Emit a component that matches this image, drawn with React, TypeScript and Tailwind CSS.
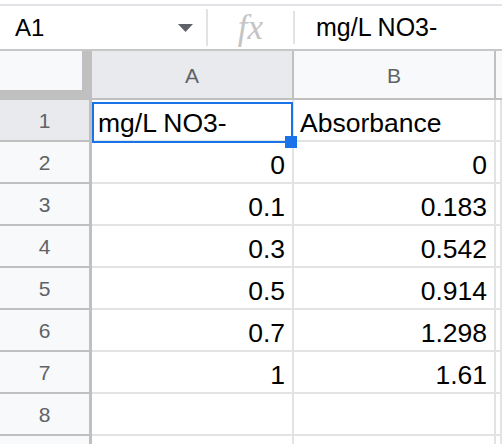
import React from "react";

const rows: { n: number; a: string; b: string; text?: boolean }[] = [
  { n: 1, a: "mg/L NO3-", b: "Absorbance", text: true },
  { n: 2, a: "0", b: "0" },
  { n: 3, a: "0.1", b: "0.183" },
  { n: 4, a: "0.3", b: "0.542" },
  { n: 5, a: "0.5", b: "0.914" },
  { n: 6, a: "0.7", b: "1.298" },
  { n: 7, a: "1", b: "1.61" },
  { n: 8, a: "", b: "" },
];

export default function App() {
  return (
    <div
      className="relative w-[502px] h-[444px] overflow-hidden bg-white"
      style={{ fontFamily: '"Liberation Sans", Arial, sans-serif' }}
    >
      {/* top line */}
      <div className="h-[4px] bg-white" />
      <div className="h-[2px] bg-[#e1e3e6]" />
      {/* formula bar */}
      <div className="flex h-[45px] items-center border-b-2 border-[#c7c7c7]">
        <div className="flex w-[206px] items-center">
          <span className="pl-[15px] text-[24px] leading-none text-black">A1</span>
          <div className="flex-1" />
          <svg width="15" height="8" viewBox="0 0 15 8" className="mr-[13px] mt-[1px]">
            <path d="M0 0 L15 0 L7.5 8 Z" fill="#5f6368" />
          </svg>
        </div>
        <div className="h-[37px] w-[2px] bg-[#e1e3e6]" />
        <div className="flex w-[85px] justify-center">
          <span
            className="text-[35px] leading-none italic text-[#c4c4c4]"
            style={{ fontFamily: '"Liberation Serif", "Times New Roman", serif' }}
          >
            fx
          </span>
        </div>
        <div className="h-[33px] w-[2px] bg-[#e1e3e6]" />
        <span className="pl-[21px] text-[25px] leading-none text-black">mg/L NO3-</span>
      </div>

      {/* column headers */}
      <div className="flex h-[49px]">
        <div className="w-[92px] h-full bg-[#c0c0c0]">
          <div className="w-[82px] h-[39px] bg-[#f8f9fa]" />
        </div>
        <div className="flex w-[202px] items-center justify-center border-r-2 border-b-2 border-[#c0c0c0] bg-[#e8eaed] pt-[2px] text-[21px] text-[#5f6368]">
          A
        </div>
        <div className="flex w-[202px] items-center justify-center border-r-2 border-b-2 border-[#c0c0c0] bg-[#f8f9fa] pt-[2px] text-[21px] text-[#5f6368]">
          B
        </div>
        <div className="flex-1 border-b-2 border-[#c0c0c0] bg-[#f8f9fa]" />
      </div>

      {/* rows */}
      {rows.map((r) => (
        <div key={r.n} className="flex h-[42px]">
          <div
            className={`flex w-[92px] items-center justify-center border-r-[3px] border-b-2 border-[#c0c0c0] pt-[1px] text-[21px] text-[#5f6368] ${
              r.n === 1 ? "bg-[#e8eaed]" : "bg-[#f8f9fa]"
            }`}
          >
            {r.n}
          </div>
          <div
            className={`flex w-[202px] items-end border-r-2 border-b-2 border-[#e2e3e3] pb-[2px] text-[26.5px] leading-[30px] text-black ${
              r.text ? "justify-start pl-[6px]" : "justify-end pr-[7px]"
            }`}
          >
            {r.a}
          </div>
          <div
            className={`flex w-[202px] items-end border-r-2 border-b-2 border-[#e2e3e3] pb-[2px] text-[26.5px] leading-[30px] text-black ${
              r.text ? "justify-start pl-[6px]" : "justify-end pr-[7px]"
            }`}
          >
            {r.b}
          </div>
          <div className="flex-1 border-r-2 border-b-2 border-[#e2e3e3]" />
        </div>
      ))}
      <div className="flex h-[42px]">
        <div className="w-[92px] border-r-[3px] border-[#c0c0c0] bg-[#f8f9fa]" />
        <div className="w-[202px] border-r-2 border-[#e2e3e3]" />
        <div className="w-[202px] border-r-2 border-[#e2e3e3]" />
        <div className="flex-1 border-r-2 border-[#e2e3e3]" />
      </div>

      {/* selection */}
      <div className="absolute left-[92px] top-[102px] h-[41px] w-[201px] border-2 border-[#1a73e8]" />
      <div className="absolute left-[285px] top-[136px] h-[12px] w-[12px] bg-[#1a73e8]" />
    </div>
  );
}
